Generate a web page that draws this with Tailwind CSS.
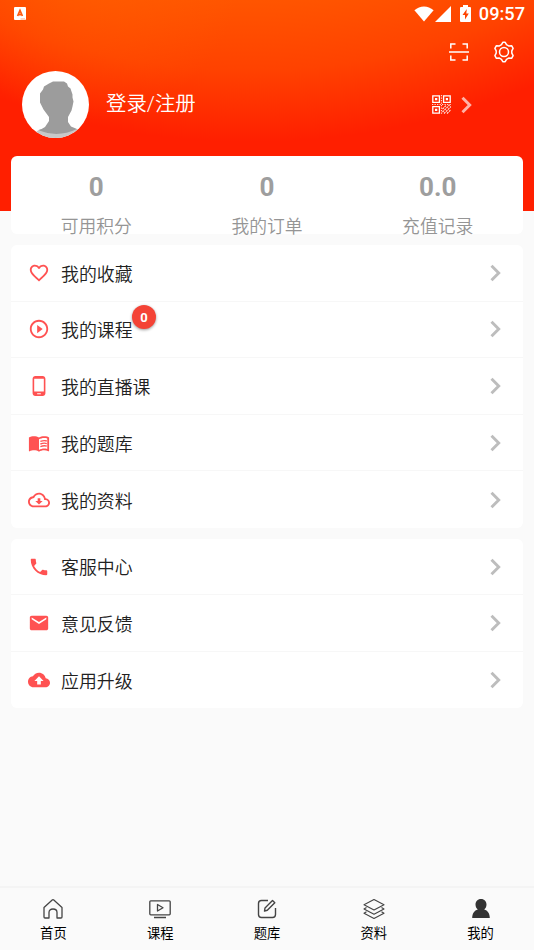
<!DOCTYPE html>
<html lang="zh-CN">
<head>
<meta charset="utf-8">
<title>我的</title>
<script src="https://cdn.jsdelivr.net/npm/@tailwindcss/browser@4"></script>
</head>
<body class="w-[534px] h-[950px] overflow-hidden bg-[#fafafa] font-['Roboto','Noto_Sans_CJK_SC',sans-serif] text-[#212121]">
<svg class="hidden">
  <symbol id="chev" viewBox="0 0 28 28"><path d="m9.500 6.800 7.200 7.200-7.200 7.200" fill="none" stroke="currentColor" stroke-width="2.900"/></symbol>
</svg>
<div class="relative flex flex-col h-[950px]">
  <header class="h-[211px] shrink-0 bg-[radial-gradient(circle_at_90px_-30px,rgba(255,104,0,.45),rgba(255,80,0,0)_150px),radial-gradient(circle_at_250px_-600px,#ff5500_600px,#ff4200_670px,#ff1f00_742px)] text-white">
    <div class="flex h-[27px] items-center pl-[14px] pr-[9px]">
      <svg class="w-3 h-[13px]" viewBox="0 0 12 13"><rect width="12" height="13" rx="1" fill="#fff"/><path d="M3.600 9 6 3.400l2.400 5.600M4.300 7.700h3.400" fill="none" stroke="#ff5a10" stroke-width="1.700"/><path d="M6.500 12h4.500" stroke="#ff9060" stroke-width=".8"/></svg>
      <svg class="ml-auto w-[20px] h-4" viewBox="0 0 20 16"><path d="M.4 4.200C6-.9 14-.9 19.600 4.200L10 15.600z" fill="#fff"/></svg>
      <svg class="ml-[1px] w-4 h-4" viewBox="0 0 16 16"><path d="M0 16 16 0v16z" fill="#fff"/></svg>
      <svg class="ml-[9px] w-[11px] h-[17px]" viewBox="0 0 11 17"><path d="M3 2V0h5v2h2q1 0 1 1v13q0 1-1 1H1q-1 0-1-1V3q0-1 1-1z" fill="#fff"/><path d="M6.800 4 2.500 10H5v4.500L8.800 8.500H6.300z" fill="#ff4300"/></svg>
      <span class="ml-2 text-[18.200px] leading-[27px] font-medium">09:57</span>
    </div>
    <div class="flex h-[49px] items-center justify-end gap-[24px] pr-[19px]">
      <svg class="w-5 h-[20px]" viewBox="0 0 20 20" fill="none" stroke="#fff" stroke-width="1.500"><path d="M1.800 6.500V2h4.700M13.500 2h4.700v4.500M1.800 13.500V18h4.700M13.500 18h4.700v-4.500M0 10h20"/></svg>
      <svg class="w-[22px] h-[22px]" viewBox="0 0 22 22" fill="none" stroke="#fff" stroke-width="1.500" stroke-linejoin="round"><path d="M9.800 1.300h2.400l1.300 2.400 2.100 1.200 3-.2 1.500 2.700-1.300 2.500v2.200l1.300 2.500-1.500 2.700-3-.2-2.100 1.200-1.300 2.400H9.800l-1.300-2.400-2.100-1.200-3 .2-1.500-2.700 1.300-2.500V9.900L1.900 7.400l1.500-2.700 3 .2 2.100-1.200z"/><circle cx="11" cy="11" r="4.500"/></svg>
    </div>
    <div class="flex h-[57px] items-center pl-[22px] pr-[57px]">
      <svg class="w-[67px] h-[67px] shrink-0" viewBox="0 0 67 67"><defs><clipPath id="av"><circle cx="33.500" cy="33.500" r="33.500"/></clipPath></defs><g clip-path="url(#av)"><rect width="67" height="67" fill="#fff"/><path d="M14 61 18 58h34l6 0v10H13z" fill="#c8c8c8"/><path d="M27 12.500 31 10.500h11l3 2 1 3 2.500 2 2 6v3l1 4-1 5-1 4-3.500 6.500v5l3 4.500 6 2.500Q36 67 17 59.500l6-3.500 4-6v-4l-5.500-7.500-3.500-7v-9l3-4 1-3z" fill="#9c9c9c"/></g></svg>
      <span class="relative -top-px ml-[17px] text-[20.400px] leading-7 font-[350]">登录/注册</span>
      <svg class="ml-auto w-[19px] h-[19px]" viewBox="0 0 19 19"><g fill="none" stroke="#fff" stroke-width="1.300"><path d="M.8.800h6.600v6.600H.800zM11.600.800h6.600v6.600h-6.600zM.8 11.600h6.600v6.600H.800z"/></g><path d="M3 3h2.300v2.300H3zM13.800 3H16v2.300h-2.200zM3 13.800h2.300V16H3z" fill="#fff"/><path d="M9.500 0v19M0 9.500h19" stroke="#fff" stroke-width="1.200" stroke-dasharray="1.300 1.200" opacity=".8"/><path d="m10.500 14 4-4M10.500 17l7-7M12 18.500l7-7M15 18.500l4-4" stroke="#fff" stroke-width="1.100" stroke-dasharray="2 .8" opacity=".9"/></svg>
      <svg class="w-[28px] h-[28px] ml-[2px] mr-[-4px] text-white/65"><use href="#chev"/></svg>
    </div>
  </header>
  <main class="-mt-[55px] px-[11px] flex flex-col gap-[11px]">
    <section class="grid grid-cols-3 h-[78px] rounded-md bg-white text-center text-[#9e9e9e]">
      <div><div class="pt-[15px] text-[26px] leading-8 font-bold">0</div><div class="mt-[10px] text-[17.800px] leading-7 font-[350] text-[#959595]">可用积分</div></div>
      <div><div class="pt-[15px] text-[26px] leading-8 font-bold">0</div><div class="mt-[10px] text-[17.800px] leading-7 font-[350] text-[#959595]">我的订单</div></div>
      <div><div class="pt-[15px] text-[26px] leading-8 font-bold">0.0</div><div class="mt-[10px] text-[17.800px] leading-7 font-[350] text-[#959595]">充值记录</div></div>
    </section>
    <section class="grid grid-rows-5 h-[283px] rounded-md bg-white divide-y divide-[#f7f7f7] text-[17.900px] font-[350]">
      <div class="flex items-center pl-[17px] pr-[13px]"><svg class="w-[22px] h-[22px]" viewBox="0 0 24 24" fill="#ff5252"><path d="M16.500 3c-1.740 0-3.410.81-4.500 2.090C10.910 3.810 9.240 3 7.500 3 4.420 3 2 5.420 2 8.500c0 3.780 3.400 6.860 8.550 11.540L12 21.350l1.450-1.320C18.600 15.360 22 12.280 22 8.500 22 5.420 19.580 3 16.500 3zm-4.400 15.550l-.1.100-.1-.1C7.140 14.240 4 11.390 4 8.500 4 6.500 5.500 5 7.500 5c1.540 0 3.040.99 3.570 2.360h1.870C13.460 5.990 14.960 5 16.500 5c2 0 3.500 1.500 3.500 3.500 0 2.890-3.140 5.740-7.900 10.050z"/></svg><span class="ml-[11px] pt-[5px]">我的收藏</span><svg class="ml-auto w-[28px] h-[28px] text-[#bdbdbd]"><use href="#chev"/></svg></div>
      <div class="flex items-center pl-[17px] pr-[13px]"><svg class="w-[22px] h-[22px]" viewBox="0 0 24 24" fill="#ff5252"><path d="M10 16.500l6-4.500-6-4.500v9zM12 2C6.480 2 2 6.480 2 12s4.480 10 10 10 10-4.480 10-10S17.520 2 12 2zm0 18c-4.410 0-8-3.590-8-8s3.590-8 8-8 8 3.590 8 8-3.590 8-8 8z"/></svg><span class="relative ml-[11px] pt-[5px]">我的课程<span class="absolute left-[71px] -top-[8px] size-[24px] rounded-full bg-[#f44336] text-white text-[13px] leading-[25px] font-bold text-center shadow-[0_1px_3px_rgba(0,0,0,.4)]">0</span></span><svg class="ml-auto w-[28px] h-[28px] text-[#bdbdbd]"><use href="#chev"/></svg></div>
      <div class="flex items-center pl-[17px] pr-[13px]"><svg class="w-[22px] h-[22px]" viewBox="0 0 24 24" fill="#ff5252"><path d="M16 1H8C6.340 1 5 2.340 5 4v16c0 1.660 1.340 3 3 3h8c1.660 0 3-1.340 3-3V4c0-1.660-1.340-3-3-3zm-2 20h-4v-1h4v1zm3.250-3H6.750V4h10.500v14z"/></svg><span class="ml-[11px] pt-[5px]">我的直播课</span><svg class="ml-auto w-[28px] h-[28px] text-[#bdbdbd]"><use href="#chev"/></svg></div>
      <div class="flex items-center pl-[17px] pr-[13px]"><svg class="w-[22px] h-[22px]" viewBox="0 0 24 24" fill="#ff5252"><path d="M21 5c-1.110-.35-2.330-.5-3.500-.5-1.950 0-4.050.4-5.500 1.500-1.450-1.100-3.550-1.500-5.500-1.500S2.450 4.900 1 6v14.650c0 .25.25.5.5.5.100 0 .15-.05.250-.05C3.100 20.450 5.050 20 6.500 20c1.950 0 4.050.4 5.500 1.500 1.350-.85 3.800-1.500 5.500-1.500 1.650 0 3.350.3 4.750 1.050.100.050.150.050.250.050.250 0 .5-.25.5-.5V6c-.6-.45-1.250-.75-2-1zm0 13.500c-1.100-.35-2.300-.5-3.500-.5-1.700 0-4.150.65-5.500 1.500V8c1.350-.85 3.800-1.500 5.500-1.500 1.200 0 2.400.15 3.500.5v11.500z"/><path d="M13.500 10.300q4-1.500 7-.5M13.500 13.100q4-1.500 7-.5M13.500 15.900q4-1.500 7-.5" fill="none" stroke="#ff5252" stroke-width="1.500"/></svg><span class="ml-[11px] pt-[5px]">我的题库</span><svg class="ml-auto w-[28px] h-[28px] text-[#bdbdbd]"><use href="#chev"/></svg></div>
      <div class="flex items-center pl-[17px] pr-[13px]"><svg class="w-[22px] h-[22px]" viewBox="0 0 24 24" fill="#ff5252"><path d="M19.350 10.040C18.670 6.590 15.640 4 12 4 9.110 4 6.600 5.640 5.350 8.040 2.340 8.360 0 10.910 0 14c0 3.310 2.690 6 6 6h13c2.760 0 5-2.240 5-5 0-2.640-2.050-4.780-4.650-4.960zM19 18H6c-2.210 0-4-1.790-4-4 0-2.050 1.530-3.760 3.560-3.970l1.070-.11.5-.95C8.080 7.140 9.940 6 12 6c2.620 0 4.880 1.860 5.390 4.430l.3 1.500 1.530.11c1.560.1 2.780 1.410 2.780 2.960 0 1.650-1.350 3-3 3zm-5.550-8h-2.900v3H8l4 4 4-4h-2.550z"/></svg><span class="ml-[11px] pt-[5px]">我的资料</span><svg class="ml-auto w-[28px] h-[28px] text-[#bdbdbd]"><use href="#chev"/></svg></div>
    </section>
    <section class="grid grid-rows-3 h-[169px] rounded-md bg-white divide-y divide-[#f7f7f7] text-[17.900px] font-[350]">
      <div class="flex items-center pl-[17px] pr-[13px]"><svg class="w-[22px] h-[22px]" viewBox="0 0 24 24" fill="#ff5252"><path d="M6.620 10.790c1.440 2.830 3.760 5.140 6.590 6.590l2.200-2.200c.27-.27.670-.36 1.020-.24 1.120.37 2.330.57 3.570.57.550 0 1 .45 1 1V20c0 .55-.45 1-1 1-9.390 0-17-7.610-17-17 0-.55.450-1 1-1h3.500c.550 0 1 .45 1 1 0 1.250.2 2.450.57 3.570.11.350.030.740-.25 1.020l-2.200 2.200z"/></svg><span class="ml-[11px] pt-[4px]">客服中心</span><svg class="ml-auto w-[28px] h-[28px] text-[#bdbdbd]"><use href="#chev"/></svg></div>
      <div class="flex items-center pl-[17px] pr-[13px]"><svg class="w-[22px] h-[22px]" viewBox="0 0 24 24" fill="#ff5252"><path d="M20 4H4c-1.100 0-1.990.9-1.990 2L2 18c0 1.100.9 2 2 2h16c1.100 0 2-.9 2-2V6c0-1.100-.9-2-2-2zm0 4l-8 5-8-5V6l8 5 8-5v2z"/></svg><span class="ml-[11px] pt-[5px]">意见反馈</span><svg class="ml-auto w-[28px] h-[28px] text-[#bdbdbd]"><use href="#chev"/></svg></div>
      <div class="flex items-center pl-[17px] pr-[13px]"><svg class="w-[22px] h-[22px]" viewBox="0 0 24 24" fill="#ff5252"><path d="M19.350 10.040C18.670 6.590 15.640 4 12 4 9.110 4 6.600 5.640 5.350 8.040 2.340 8.360 0 10.910 0 14c0 3.310 2.690 6 6 6h13c2.760 0 5-2.240 5-5 0-2.640-2.050-4.780-4.650-4.960zM14 13v4h-4v-4H7l5-5 5 5h-3z"/></svg><span class="ml-[11px] pt-[5px]">应用升级</span><svg class="ml-auto w-[28px] h-[28px] text-[#bdbdbd]"><use href="#chev"/></svg></div>
    </section>
  </main>
  <nav class="mt-auto h-[64px] grid grid-cols-5 border-t-2 border-[#f4f4f4] text-[13.300px] leading-5 text-black">
    <div class="flex flex-col items-center pt-[10px] gap-[4px]"><svg class="w-[22px] h-[22px]" viewBox="0 0 22 22" fill="none" stroke="#444" stroke-width="1.300" stroke-linejoin="round"><path d="M2 9.500 10.200 2q.8-.7 1.600 0L20 9.500V19q0 1-1 1h-4v-5.500q0-3.500-4-3.500t-4 3.500V20H3q-1 0-1-1z"/></svg>首页</div>
    <div class="flex flex-col items-center pt-[10px] gap-[4px]"><svg class="w-[22px] h-[22px]" viewBox="0 0 22 22" fill="none" stroke="#444" stroke-width="1.300" stroke-linejoin="round"><rect x=".8" y="2.800" width="20.400" height="14" rx="1"/><path d="M8.500 6.500v6.500l5.500-3.250zM5 19.500h12"/></svg>课程</div>
    <div class="flex flex-col items-center pt-[10px] gap-[4px]"><svg class="w-[22px] h-[22px]" viewBox="0 0 22 22" fill="none" stroke="#444" stroke-width="1.400" stroke-linejoin="round"><path d="M12 2.500H5.500q-3 0-3 3v11q0 3 3 3h11q3 0 3-3V10"/><path d="m9 10 7.500-7.500 2.300 2.300-7.500 7.500L8.500 13z"/></svg>题库</div>
    <div class="flex flex-col items-center pt-[10px] gap-[4px]"><svg class="w-[22px] h-[22px]" viewBox="0 0 22 22" fill="none" stroke="#444" stroke-width="1.100" stroke-linejoin="round"><path d="m11 1.500 10 5.200-10 5.200L1 6.700zM3.500 9.500 1 11l10 5.200L21 11l-2.500-1.500M3.500 13.800 1 15.300l10 5.200 10-5.200-2.500-1.500"/></svg>资料</div>
    <div class="flex flex-col items-center pt-[10px] gap-[4px]"><svg class="w-[22px] h-[22px]" viewBox="0 0 22 22" fill="#333"><path d="M11 1c3.500 0 5.500 2.500 5.500 5.500 0 2.300-.9 3.900-2.300 5 3.500 1 5.600 4 5.600 8.500H2.200c0-4.500 2.100-7.500 5.600-8.500-1.400-1.100-2.300-2.700-2.300-5C5.500 3.500 7.500 1 11 1z"/></svg>我的</div>
  </nav>
</div>
</body>
</html>
